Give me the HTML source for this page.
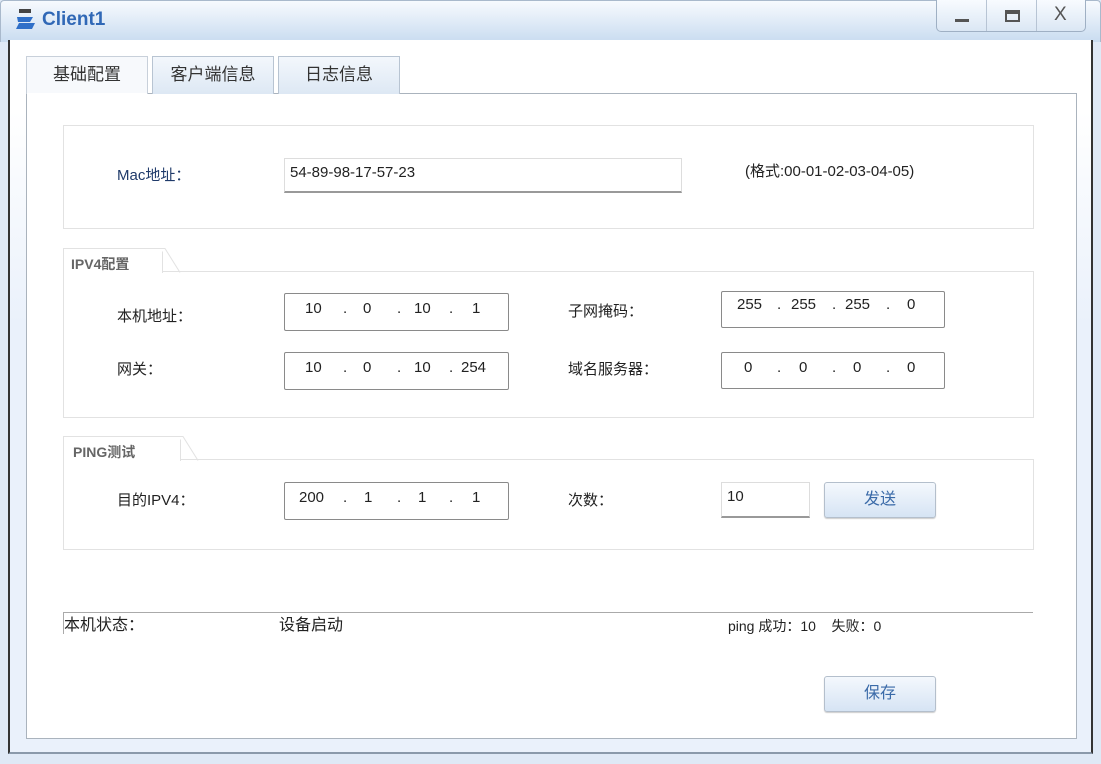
<!DOCTYPE html>
<html><head><meta charset="utf-8"><style>
*{margin:0;padding:0;box-sizing:border-box}
body{width:1101px;height:764px;position:relative;overflow:hidden;background:#dfe9f6;font-family:"Liberation Sans","Noto Sans CJK SC",sans-serif;font-size:15px;color:#222}
.a{position:absolute}
.t{position:absolute;white-space:nowrap;line-height:18px}
.box{position:absolute;border:1px solid #8a8a8a;background:#fff;border-radius:2px}
.grp{position:absolute;border:1px solid #e2e2e2;background:#fff}
.btn{position:absolute;border:1px solid #b4bfcc;border-radius:3px;background:linear-gradient(#f4f8fd,#d6e4f4);color:#3a6aa8;text-align:center;font-size:16px;box-shadow:0 1px 1px #ccc}
.tab{position:absolute;border:1px solid #b8c4d2;border-bottom:none;background:linear-gradient(#f3f7fc,#dde8f4);text-align:center;font-size:17px;color:#333;line-height:36px}
</style></head><body>
<div class="a" style="left:0;top:0;width:1101px;height:42px;background:linear-gradient(#f7fafe,#c9dcf0);border:1px solid #a9b9cc;border-bottom:none;border-radius:4px 4px 0 0"></div>
<svg class="a" style="left:14px;top:8px" width="24" height="26" viewBox="0 0 24 26"><rect x="5" y="1" width="12" height="4" fill="#444"/><path d="M3 9h16l-3 5H4z" fill="#2f6fc8"/><path d="M5 15h16l-3 6H2z" fill="#2f6fc8"/></svg>
<div class="t" style="left:42px;top:11px;font-size:19px;font-weight:bold;color:#3068b6">Client1</div>
<div class="a" style="left:936px;top:0;width:150px;height:32px;border:1px solid #9fb0c4;border-top:none;border-radius:0 0 5px 5px;background:linear-gradient(#f8fbff,#dbe7f4)"></div>
<div class="a" style="left:986px;top:0;width:1px;height:31px;background:#b7c4d4"></div>
<div class="a" style="left:1036px;top:0;width:1px;height:31px;background:#b7c4d4"></div>
<div class="a" style="left:955px;top:19px;width:14px;height:3px;background:#555"></div>
<div class="a" style="left:1005px;top:10px;width:15px;height:12px;border:2px solid #555;border-top-width:4px"></div>
<div class="t" style="left:1054px;top:6px;font-size:19px;color:#555">X</div>
<div class="a" style="left:8px;top:40px;width:1085px;height:714px;border-left:2px solid #333;border-right:2px solid #333;border-bottom:2px solid #8a99aa;background:linear-gradient(#fff 0%,#fff 10%,#eaf1fb 40%,#eaf1fb)"></div>
<div class="a" style="left:26px;top:93px;width:1051px;height:646px;border:1px solid #aab3bd;background:#fff"></div>
<div class="tab" style="left:26px;top:56px;width:122px;height:38px;background:#f7f9fc;border-color:#c8d0da">基础配置</div>
<div class="tab" style="left:152px;top:56px;width:122px;height:38px">客户端信息</div>
<div class="tab" style="left:278px;top:56px;width:122px;height:38px">日志信息</div>
<div class="a" style="left:27px;top:93px;width:120px;height:2px;background:#fff"></div>

<div class="grp" style="left:63px;top:125px;width:971px;height:104px"></div>
<div class="t" style="left:117px;top:167px;color:#1f3a6a">Mac地址：</div>
<div class="a" style="left:284px;top:158px;width:398px;height:35px;border:1px solid #ddd;border-bottom:2px solid #999;background:#fff"></div>
<div class="t" style="left:290px;top:164px">54-89-98-17-57-23</div>
<div class="t" style="left:745px;top:163px">(格式:00-01-02-03-04-05)</div>

<div class="grp" style="left:63px;top:271px;width:971px;height:147px"></div>
<div class="a" style="left:63px;top:248px;width:100px;height:25px;border:1px solid #e2e2e2;border-bottom:none;background:#fff"></div>
<svg class="a" style="left:160px;top:248px" width="24" height="25"><path d="M0 0.5L5 0.5L20 24.5" stroke="#e2e2e2" fill="#fff"/></svg>
<div class="t" style="left:71px;top:255px;font-weight:bold;color:#666;font-size:14px">IPV4配置</div>
<div class="t" style="left:117px;top:308px">本机地址：</div>
<div class="t" style="left:117px;top:361px">网关：</div>
<div class="t" style="left:568px;top:303px">子网掩码：</div>
<div class="t" style="left:568px;top:361px">域名服务器：</div>
<div class="box" style="left:284px;top:293px;width:225px;height:38px"></div>
<div class="t" style="left:305px;top:300px">10</div><div class="t" style="left:343px;top:300px">.</div><div class="t" style="left:363px;top:300px">0</div><div class="t" style="left:397px;top:300px">.</div><div class="t" style="left:414px;top:300px">10</div><div class="t" style="left:449px;top:300px">.</div><div class="t" style="left:472px;top:300px">1</div>
<div class="box" style="left:284px;top:352px;width:225px;height:38px"></div>
<div class="t" style="left:305px;top:359px">10</div><div class="t" style="left:343px;top:359px">.</div><div class="t" style="left:363px;top:359px">0</div><div class="t" style="left:397px;top:359px">.</div><div class="t" style="left:414px;top:359px">10</div><div class="t" style="left:449px;top:359px">.</div><div class="t" style="left:461px;top:359px">254</div>
<div class="box" style="left:721px;top:291px;width:224px;height:37px"></div>
<div class="t" style="left:737px;top:296px">255</div><div class="t" style="left:777px;top:296px">.</div><div class="t" style="left:791px;top:296px">255</div><div class="t" style="left:832px;top:296px">.</div><div class="t" style="left:845px;top:296px">255</div><div class="t" style="left:886px;top:296px">.</div><div class="t" style="left:907px;top:296px">0</div>
<div class="box" style="left:721px;top:352px;width:224px;height:37px"></div>
<div class="t" style="left:744px;top:359px">0</div><div class="t" style="left:777px;top:359px">.</div><div class="t" style="left:799px;top:359px">0</div><div class="t" style="left:832px;top:359px">.</div><div class="t" style="left:853px;top:359px">0</div><div class="t" style="left:886px;top:359px">.</div><div class="t" style="left:907px;top:359px">0</div>

<div class="grp" style="left:63px;top:459px;width:971px;height:91px"></div>
<div class="a" style="left:63px;top:436px;width:118px;height:25px;border:1px solid #e2e2e2;border-bottom:none;background:#fff"></div>
<svg class="a" style="left:178px;top:436px" width="24" height="25"><path d="M0 0.5L5 0.5L20 24.5" stroke="#e2e2e2" fill="#fff"/></svg>
<div class="t" style="left:73px;top:443px;font-weight:bold;color:#666;font-size:14px">PING测试</div>
<div class="t" style="left:117px;top:492px">目的IPV4：</div>
<div class="box" style="left:284px;top:482px;width:225px;height:38px"></div>
<div class="t" style="left:299px;top:489px">200</div><div class="t" style="left:343px;top:489px">.</div><div class="t" style="left:364px;top:489px">1</div><div class="t" style="left:397px;top:489px">.</div><div class="t" style="left:418px;top:489px">1</div><div class="t" style="left:449px;top:489px">.</div><div class="t" style="left:472px;top:489px">1</div>
<div class="t" style="left:568px;top:492px">次数：</div>
<div class="a" style="left:721px;top:482px;width:89px;height:36px;border:1px solid #ddd;border-bottom:2px solid #999;background:#fff"></div>
<div class="t" style="left:727px;top:488px">10</div>
<div class="btn" style="left:824px;top:482px;width:112px;height:36px;line-height:34px">发送</div>

<div class="a" style="left:63px;top:612px;width:970px;height:1px;background:#aaa"></div>
<div class="a" style="left:63px;top:612px;width:1px;height:22px;background:#aaa"></div>
<div class="t" style="left:64px;top:617px;font-size:16px">本机状态：</div>
<div class="t" style="left:279px;top:617px;font-size:16px">设备启动</div>
<div class="t" style="left:728px;top:617px;font-size:14px">ping 成功：10&nbsp;&nbsp;&nbsp;&nbsp;失败：0</div>
<div class="btn" style="left:824px;top:676px;width:112px;height:36px;line-height:34px">保存</div>
</body></html>
